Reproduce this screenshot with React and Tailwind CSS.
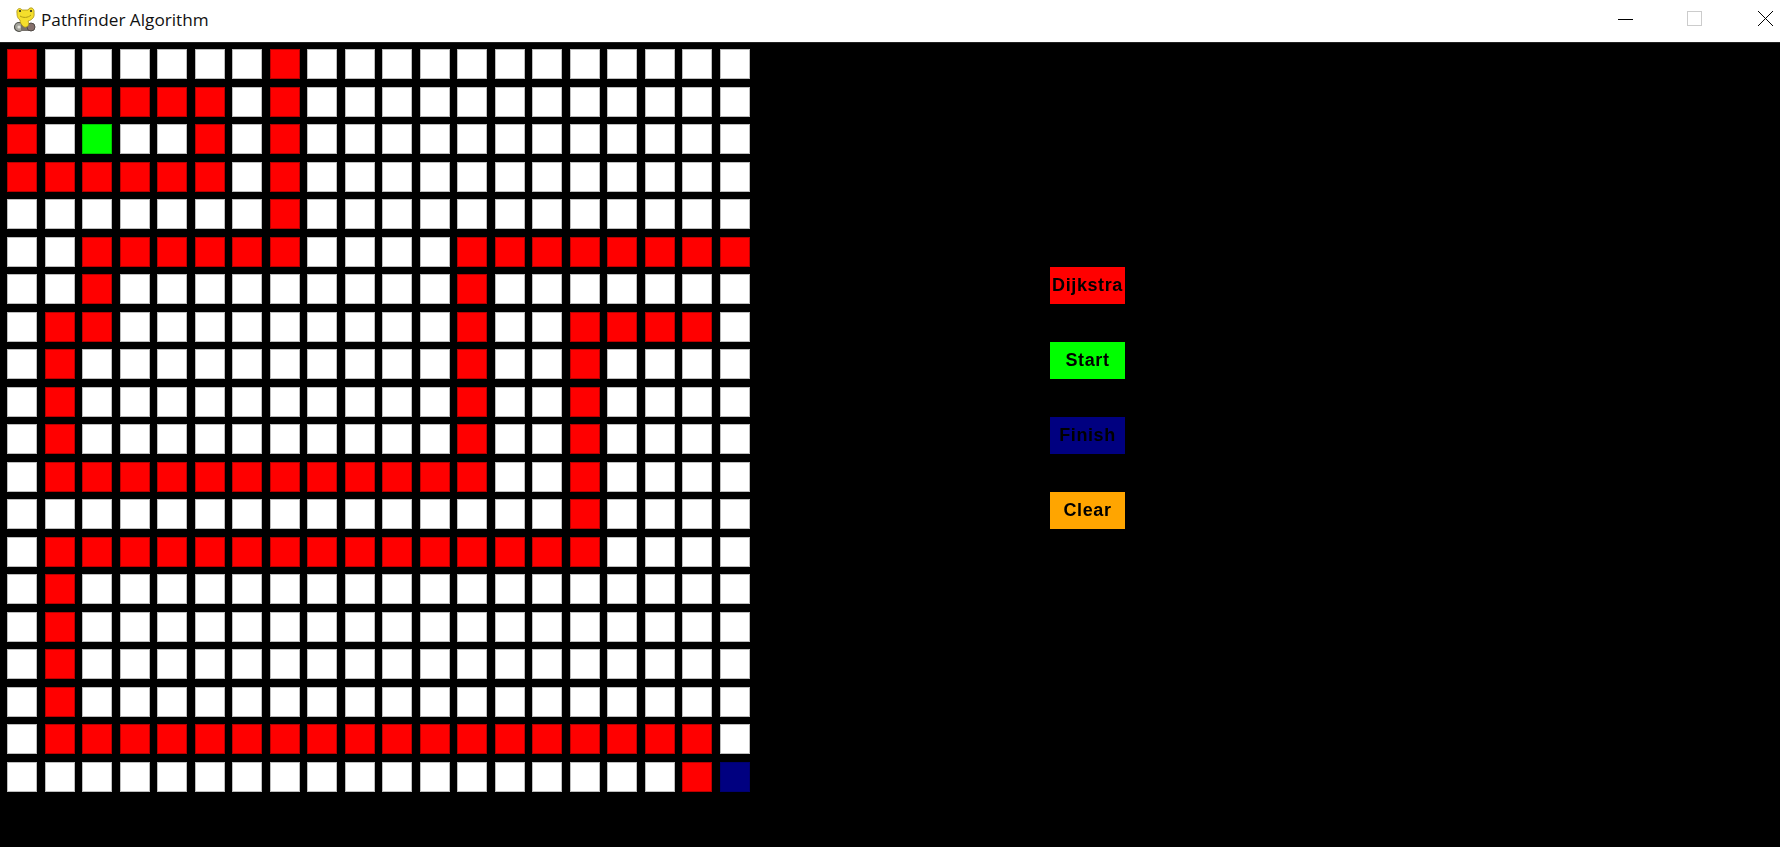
import React from "react";

// red cells per row of the board, [from, to] column ranges
const RED_ROWS = [
  [[0, 0], [7, 7]],
  [[0, 0], [2, 5], [7, 7]],
  [[0, 0], [5, 5], [7, 7]],
  [[0, 5], [7, 7]],
  [[7, 7]],
  [[2, 7], [12, 19]],
  [[2, 2], [12, 12]],
  [[1, 2], [12, 12], [15, 18]],
  [[1, 1], [12, 12], [15, 15]],
  [[1, 1], [12, 12], [15, 15]],
  [[1, 1], [12, 12], [15, 15]],
  [[1, 12], [15, 15]],
  [[15, 15]],
  [[1, 15]],
  [[1, 1]],
  [[1, 1]],
  [[1, 1]],
  [[1, 1]],
  [[1, 18]],
  [[18, 18]],
];

const cellClass = (row, col) => {
  if (row === 2 && col === 2) return "bg-[#00ff00] border-[#00c800]";
  if (row === 19 && col === 19) return "bg-[#000080] border-[#000070]";
  const isRed = RED_ROWS[row].some(([from, to]) => col >= from && col <= to);
  return isRed ? "bg-[#ff0000] border-[#b80000]" : "bg-white border-[#bdbdbd]";
};

const Board = () => (
  <div className="grid grid-cols-[repeat(20,30px)] auto-rows-[30px] gap-[7.5px]">
    {RED_ROWS.map((_, row) =>
      Array.from({ length: 20 }, (_, col) => (
        <div key={`${row}-${col}`} className={`border ${cellClass(row, col)}`} />
      ))
    )}
  </div>
);

const SnakeIcon = () => (
  <svg width="24" height="28" viewBox="0 0 24 28" className="shrink-0">
    <circle cx="6" cy="21" r="4.5" fill="#a4a49c" stroke="#4f4f49" strokeWidth="1.2" />
    <circle cx="6" cy="21" r="1.6" fill="#e2e2da" />
    <rect x="8" y="18" width="12" height="7" fill="#77726c" />
    <circle cx="18" cy="21" r="4" fill="#86706c" stroke="#504a46" strokeWidth="1" />
    <path d="M4 7 C3 3 7 1 9 4 L15 4 C17 0 22 2 21 7 C22 11 19 14 15 15 C17 18 15 22 11 21 C8 19 7 16 7 14 C4 12 4 9 4 7 Z" fill="#f4de2c" stroke="#a8921a" strokeWidth="0.8" />
    <circle cx="7" cy="5" r="1.1" fill="#222" />
    <circle cx="18" cy="5" r="1.1" fill="#222" />
    <path d="M7 10 C10 12 15 12 18 9" fill="none" stroke="#b09a14" strokeWidth="1" />
  </svg>
);

const TitleBar = () => (
  <div className="h-[43px] shrink-0 flex items-center justify-between bg-white border-b border-[#222222]">
    <div className="flex items-center pl-[13px] pb-[3px]">
      <SnakeIcon />
      <span className="ml-[4px] text-[17.2px] text-[#111111] font-['Open_Sans',sans-serif]">
        Pathfinder Algorithm
      </span>
    </div>
    <div className="flex items-center pb-[6px] pr-[7px]">
      <svg width="15" height="15" viewBox="0 0 15 15" className="mr-[54px]">
        <path d="M0 8.5H15" stroke="#000" strokeWidth="1" />
      </svg>
      <svg width="15" height="15" viewBox="0 0 15 15" className="mr-[56px]">
        <rect x="0.5" y="0.5" width="14" height="14" fill="none" stroke="#cccccc" />
      </svg>
      <svg width="15" height="15" viewBox="0 0 15 15">
        <path d="M0 0L15 15M15 0L0 15" stroke="#000" strokeWidth="1" />
      </svg>
    </div>
  </div>
);

const ActionButton = ({ label, color }) => (
  <div className={`w-[75px] h-[37px] flex items-center justify-center ${color}`}>
    <span className="text-[18px] font-bold tracking-[0.6px] text-black blur-[0.6px] font-['Liberation_Sans',sans-serif]">
      {label}
    </span>
  </div>
);

const App = () => {
  return (
    <div className="w-[1780px] h-[847px] flex flex-col bg-black overflow-hidden">
      <TitleBar />
      <div className="flex pl-[7px] pt-[6px]">
        <Board />
        <div className="ml-[300.5px] mt-[218px] flex flex-col gap-[38px]">
          <ActionButton label="Dijkstra" color="bg-[#ff0000]" />
          <ActionButton label="Start" color="bg-[#00ff00]" />
          <ActionButton label="Finish" color="bg-[#000080]" />
          <ActionButton label="Clear" color="bg-[#ffa500]" />
        </div>
      </div>
    </div>
  );
};

export default App;
